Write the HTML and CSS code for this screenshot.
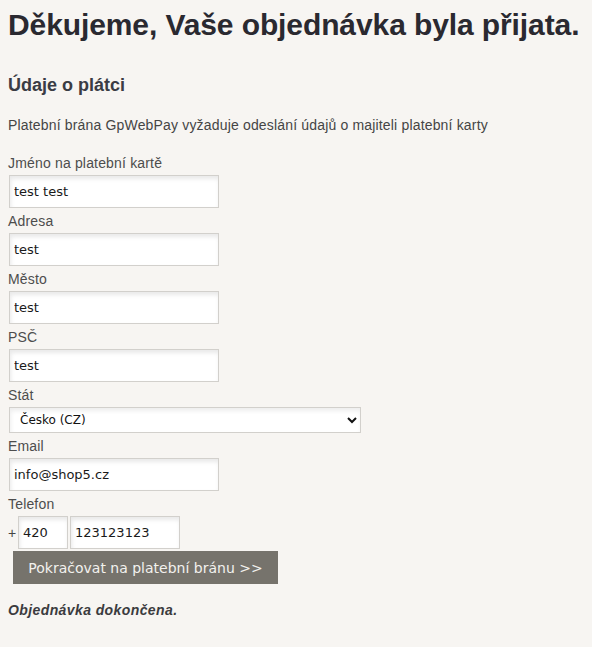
FILE: index.html
```html
<!DOCTYPE html>
<html lang="cs">

<head>
    <meta charset="UTF-8">
    <meta name="viewport" content="width=device-width, initial-scale=1.0">
    <title>Objednávka přijata</title>
    <link rel="stylesheet" href="styles.css">
</head>

<body>

    <h1 class="title">Děkujeme, Vaše objednávka byla přijata.</h1>

    <h2 class="subtitle">Údaje o plátci</h2>
    <p class="note">Platební brána GpWebPay vyžaduje odeslání údajů o majiteli platební karty</p>

    <form class="payer-form" action="#" method="POST">
        <label for="name">Jméno na platební kartě</label>
        <input type="text" id="name" class="text-input" value="test test">

        <label for="street">Adresa</label>
        <input type="text" id="street" class="text-input" value="test">

        <label for="city">Město</label>
        <input type="text" id="city" class="text-input" value="test">

        <label for="zip">PSČ</label>
        <input type="text" id="zip" class="text-input" value="test">

        <label for="country">Stát</label>
        <select id="country" class="country-select">
            <option value="CZ">Česko (CZ)</option>
            <option value="SK">Slovensko (SK)</option>
        </select>

        <label for="email">Email</label>
        <input type="text" id="email" class="text-input" value="info@shop5.cz">

        <label for="phone">Telefon</label>
        <div class="phone-row">
            <span class="phone-plus">+</span>
            <input type="text" class="text-input phone-prefix" value="420">
            <input type="text" id="phone" class="text-input phone-number" value="123123123">
        </div>

        <button type="submit" class="pay-button">Pokračovat na platební bránu &gt;&gt;</button>
    </form>

    <p class="done">Objednávka dokončena.</p>

</body>

</html>
```

FILE: styles.css
```css
body {
    font-family: "Liberation Sans", Arial, sans-serif;
    font-size: 14px;
    background-color: #f7f5f2;
    color: #4a4a4a;
    margin: 8px;
}

.title {
    font-size: 30px;
    line-height: 34px;
    font-weight: bold;
    letter-spacing: -0.1px;
    color: #2a2930;
    margin: 0;
}

.subtitle {
    font-size: 18px;
    line-height: 21px;
    font-weight: bold;
    color: #3a3c44;
    margin: 33px 0 21px;
}

.note {
    line-height: 16px;
    letter-spacing: 0.17px;
    color: #454545;
    margin: 0 0 17px;
}

.payer-form {
    display: flex;
    flex-direction: column;
    align-items: flex-start;
    margin: 0;
}

.payer-form label {
    display: block;
    line-height: 16px;
    letter-spacing: 0.17px;
    margin-top: 5px;
    color: #4d4d4d;
}

.text-input {
    box-sizing: border-box;
    width: 210px;
    height: 33px;
    margin: 4px 0 0 1px;
    padding: 0 4px;
    font-family: "DejaVu Sans", Verdana, sans-serif;
    font-size: 13px;
    color: #1a1a1a;
    background-color: #fff;
    border: 1px solid #d2d0cc;
    border-radius: 0;
    box-shadow: inset 1px 3px 4px rgba(0, 0, 0, 0.09);
    outline: none;
}

.country-select {
    box-sizing: border-box;
    width: 352px;
    height: 26px;
    margin: 4px 0 0 1px;
    padding: 0 0 0 6px;
    font-family: "DejaVu Sans", Verdana, sans-serif;
    font-size: 12px;
    color: #111;
    background-color: #fff;
    border: 1px solid #d2d0cc;
    border-radius: 0;
    box-shadow: inset 1px 3px 4px rgba(0, 0, 0, 0.07);
}

.phone-row {
    display: flex;
    align-items: center;
    gap: 2px;
    margin-top: 4px;
}

.phone-row .text-input {
    margin: 0;
}

.phone-plus {
    width: 8px;
    color: #444;
}

.phone-prefix {
    width: 50px;
}

.phone-number {
    width: 110px;
}

.pay-button {
    box-sizing: border-box;
    width: 265px;
    height: 33px;
    margin: 2px 0 0 5px;
    padding: 0;
    font-family: "DejaVu Sans", Verdana, sans-serif;
    font-size: 14px;
    color: #f2f1ee;
    background-color: #76736c;
    border: none;
    border-radius: 0;
    cursor: pointer;
}

.pay-button:hover {
    background-color: #5f5c56;
}

.done {
    font-weight: bold;
    font-style: italic;
    line-height: 16px;
    letter-spacing: 0.4px;
    color: #3b3b3e;
    margin: 18px 0 0;
}
```
